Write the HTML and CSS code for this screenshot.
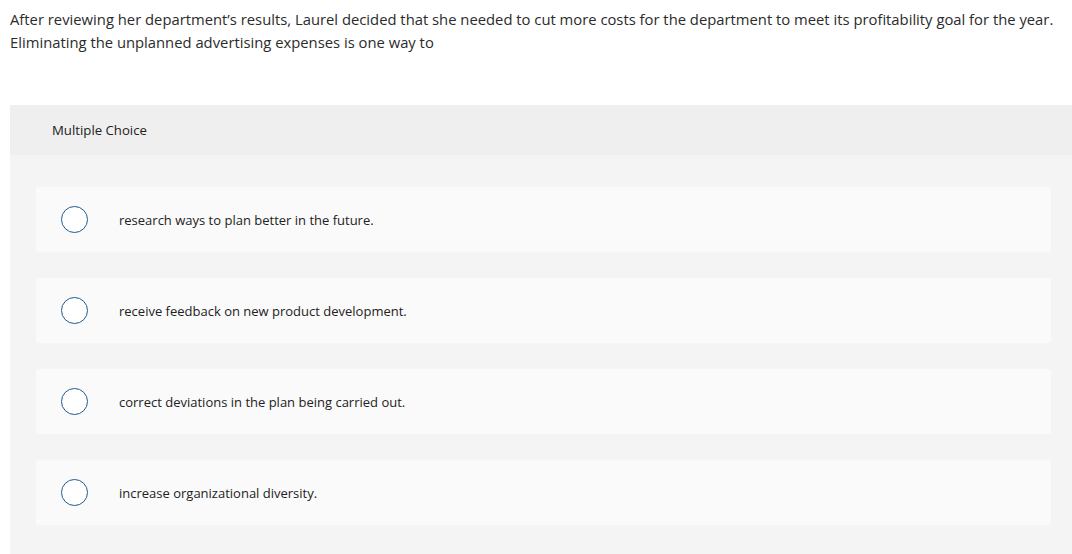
FILE: index.html
```html
<!DOCTYPE html>
<html>
<head>
<meta charset="utf-8">
<link rel="stylesheet" href="styles.css">
</head>
<body>
<div class="question">After reviewing her department’s results, Laurel decided that she needed to cut more costs for the department to meet its profitability goal for the year. Eliminating the unplanned advertising expenses is one way to</div>
<div class="panel">
  <div class="panel-head">Multiple Choice</div>
  <div class="panel-body">
    <div class="option"><span class="radio"></span><span class="label">research ways to plan better in the future.</span></div>
    <div class="option"><span class="radio"></span><span class="label">receive feedback on new product development.</span></div>
    <div class="option"><span class="radio"></span><span class="label">correct deviations in the plan being carried out.</span></div>
    <div class="option"><span class="radio"></span><span class="label">increase organizational diversity.</span></div>
  </div>
</div>
</body>
</html>
```
FILE: styles.css
```css
html, body { margin: 0; padding: 0; background: #fff; }
body {
  font-family: "Open Sans", "Liberation Sans", Arial, sans-serif;
  color: #2b2b2b;
  overflow: hidden;
}
.question {
  padding: 8px 10px 0 10px;
  font-size: 14.8px;
  line-height: 23px;
  height: 97px;
}
.panel {
  margin-left: 10px;
  background: #f4f4f4;
}
.panel-head {
  background: #efefef;
  height: 50px;
  display: flex;
  align-items: center;
  padding-left: 42px;
  font-size: 13.2px;
  color: #222;
}
.panel-body {
  padding: 32px 21px 40px 26px;
  display: flex;
  flex-direction: column;
  gap: 26px;
}
.option {
  background: #fafafa;
  border-radius: 3px;
  height: 65px;
  display: flex;
  align-items: center;
  padding-left: 25px;
}
.radio {
  width: 25px;
  height: 25px;
  border: 1.5px solid #1e5a90;
  border-radius: 50%;
  background: #fff;
  flex: none;
}
.label {
  margin-left: 31px;
  font-size: 13px;
  color: #222;
}
```
